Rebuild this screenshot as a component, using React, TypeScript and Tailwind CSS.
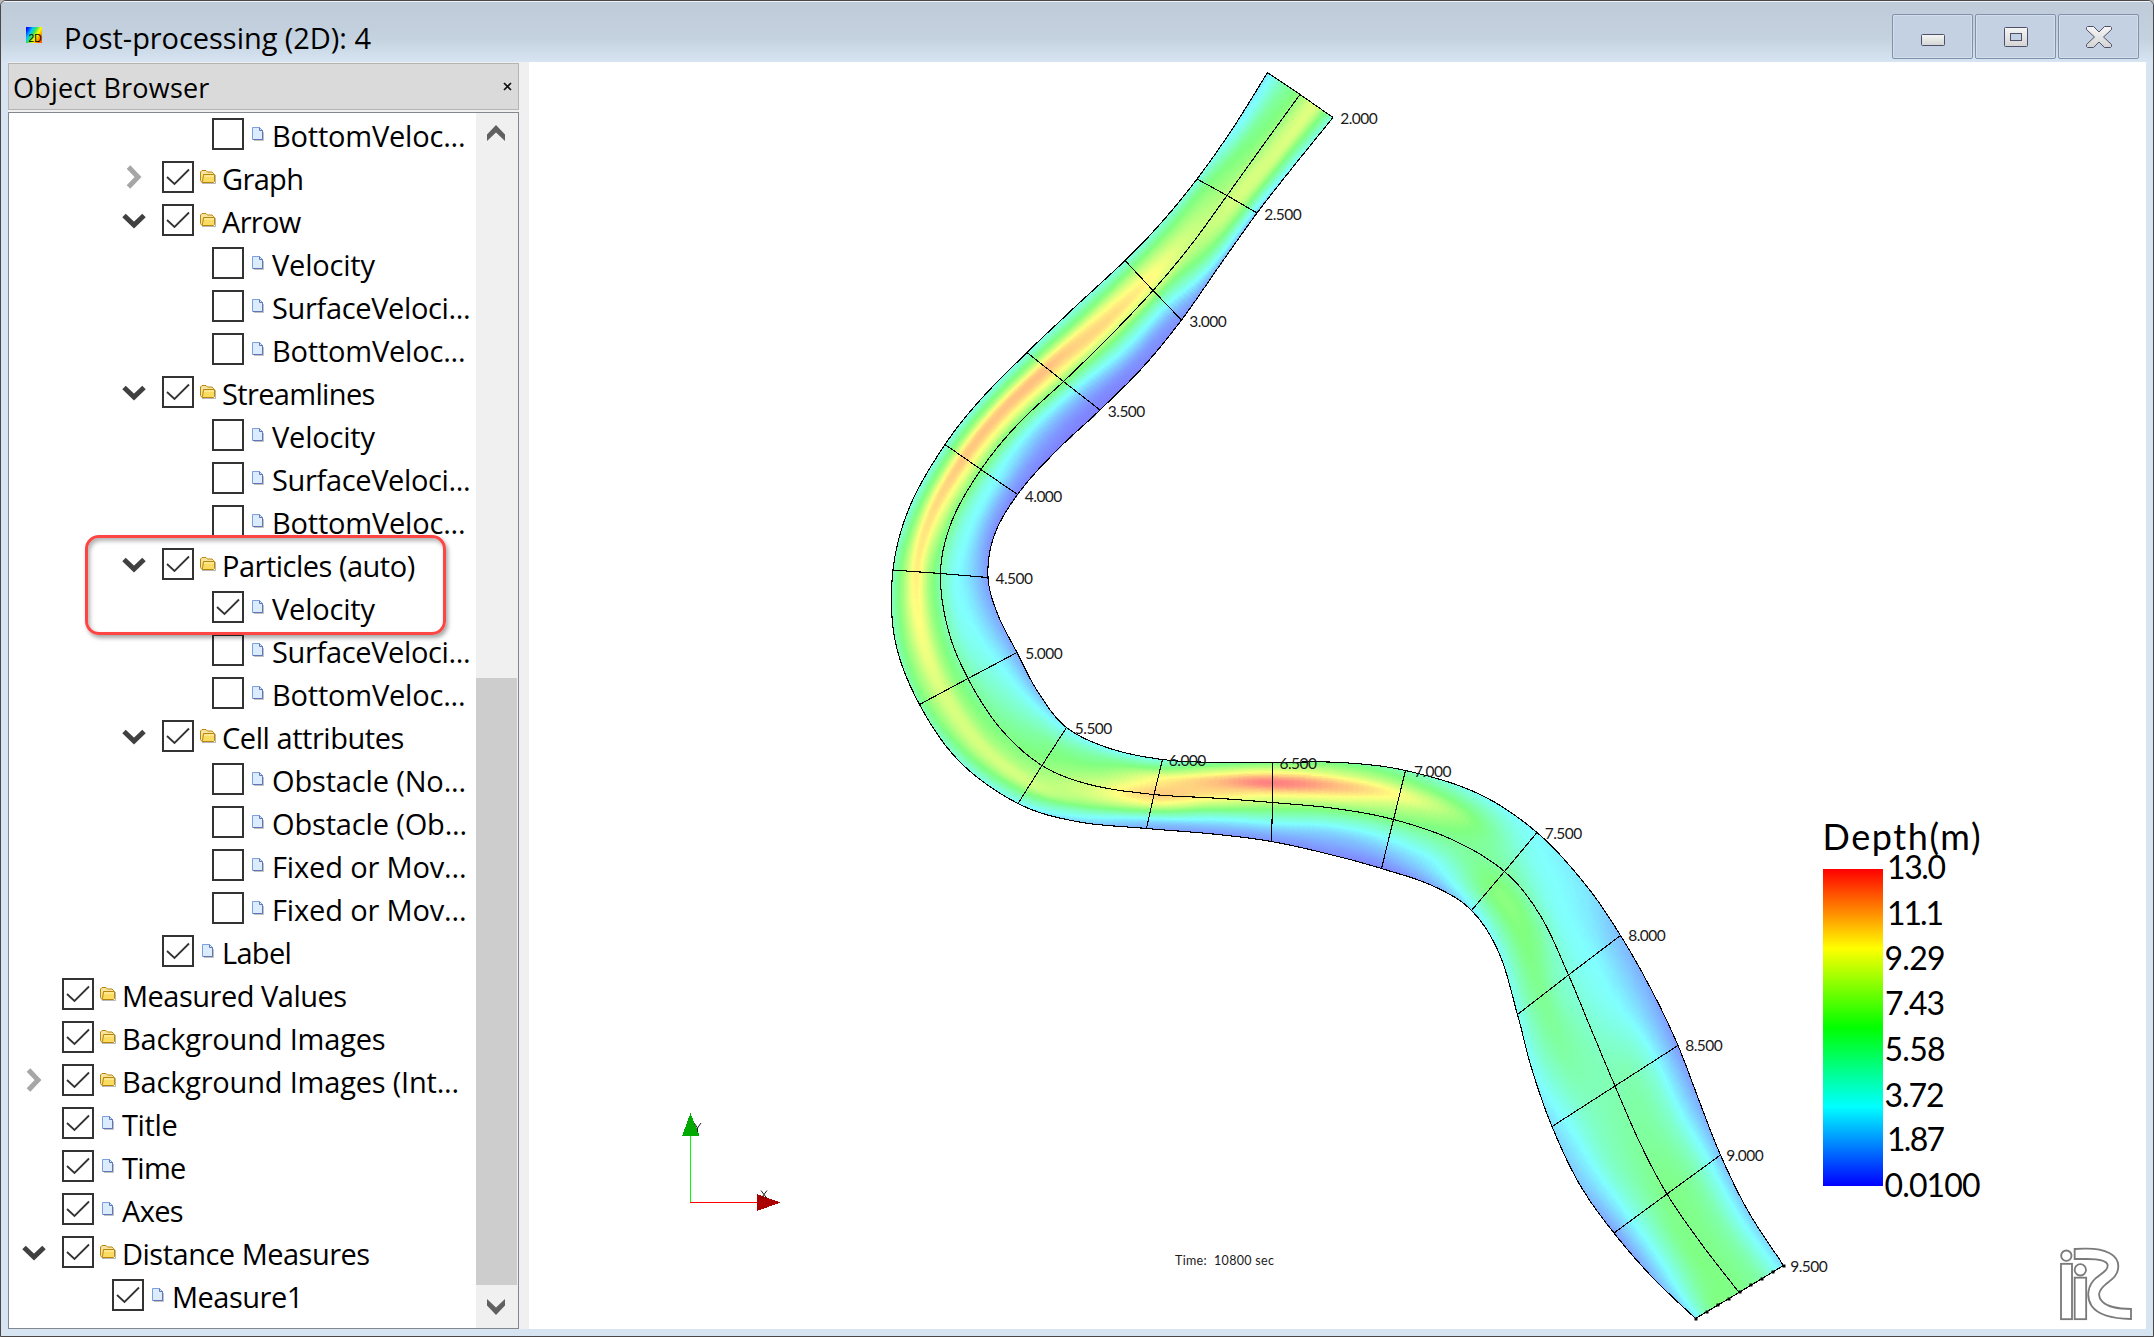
import React from "react";

type Pt = [number, number];

/* ---------- river geometry: banks and centre line at every half station ---------- */

const LEFT: Pt[] = [
  [1267.5, 72.5], [1233, 128], [1197, 179], [1161, 223], [1125, 260.5], [1076, 306], [1027, 352.5], [982, 398],
  [945, 444.5], [910, 506], [893, 570], [895, 640], [919.5, 704.5], [960, 762], [1018, 803.5], [1076.5, 821.5],
  [1146.5, 828.5], [1213, 834], [1271.5, 841.5], [1328, 854], [1381.5, 868.5], [1433, 886], [1471.5, 910.5], [1499, 953],
  [1517.5, 1014.5], [1531.5, 1068], [1552, 1126.5], [1580, 1185], [1614, 1233], [1653, 1278], [1695.5, 1318.5],
];
const MID: Pt[] = [
  [1300, 94.5], [1264, 144], [1227, 195.5], [1191, 245], [1153, 290.5], [1108, 338], [1063.5, 381.5], [1018, 424],
  [981, 469.5], [951.5, 522], [940.5, 573.5], [948, 629], [968, 678.5], [1000, 728], [1042, 765.5], [1091.5, 785],
  [1154, 794.5], [1213, 798], [1272.5, 802.5], [1335, 808.5], [1393.5, 819.5], [1453, 840], [1504.5, 871.5], [1540, 915],
  [1568.5, 975], [1591, 1029], [1615, 1086], [1640, 1143], [1667, 1194], [1701.5, 1244], [1739, 1292.5],
];
const RIGHT: Pt[] = [
  [1333, 117.5], [1293, 167], [1257, 213], [1220, 265], [1181.5, 320], [1143, 367], [1100, 410], [1055, 452],
  [1017.5, 494.5], [994, 536], [988, 577.5], [998, 615], [1017, 652.5], [1038, 692], [1066.5, 727.5], [1110, 748.5],
  [1162.5, 759.5], [1217, 762.5], [1272.5, 762.5], [1340, 762.5], [1405.5, 770.5], [1478, 793.5], [1537, 832.5], [1585, 884],
  [1620.5, 935.5], [1652, 991], [1678, 1045.5], [1700, 1103], [1720.5, 1155], [1748, 1211], [1783.5, 1265.5],
];

/* Relative depth (0..1) at nine points across the channel, left bank to right bank. */
const DEPTH: number[][] = [
  [0.19, 0.3, 0.4, 0.47, 0.54, 0.65, 0.68, 0.5, 0.3],
  [0.22, 0.32, 0.45, 0.5, 0.56, 0.65, 0.66, 0.45, 0.22],
  [0.28, 0.45, 0.53, 0.57, 0.62, 0.67, 0.6, 0.38, 0.13],
  [0.3, 0.48, 0.6, 0.66, 0.64, 0.58, 0.47, 0.3, 0.1],
  [0.28, 0.5, 0.68, 0.77, 0.66, 0.42, 0.24, 0.1, 0.03],
  [0.28, 0.5, 0.76, 0.82, 0.62, 0.38, 0.2, 0.06, 0.01],
  [0.27, 0.55, 0.86, 0.77, 0.52, 0.28, 0.12, 0.03, 0.0],
  [0.27, 0.55, 0.86, 0.75, 0.49, 0.28, 0.14, 0.05, 0.0],
  [0.27, 0.55, 0.85, 0.73, 0.51, 0.31, 0.21, 0.09, 0.01],
  [0.28, 0.55, 0.81, 0.68, 0.47, 0.31, 0.23, 0.12, 0.02],
  [0.35, 0.58, 0.78, 0.58, 0.41, 0.28, 0.22, 0.14, 0.05],
  [0.37, 0.58, 0.74, 0.56, 0.4, 0.28, 0.24, 0.16, 0.07],
  [0.4, 0.58, 0.68, 0.54, 0.43, 0.34, 0.28, 0.2, 0.08],
  [0.3, 0.53, 0.67, 0.56, 0.48, 0.42, 0.35, 0.26, 0.12],
  [0.23, 0.45, 0.65, 0.6, 0.54, 0.5, 0.46, 0.36, 0.22],
  [0.15, 0.33, 0.55, 0.66, 0.66, 0.59, 0.51, 0.42, 0.24],
  [0.08, 0.2, 0.47, 0.73, 0.84, 0.8, 0.72, 0.5, 0.28],
  [0.04, 0.15, 0.32, 0.56, 0.75, 0.84, 0.86, 0.66, 0.42],
  [0.03, 0.12, 0.26, 0.44, 0.62, 0.8, 1, 0.75, 0.47],
  [0.02, 0.09, 0.18, 0.34, 0.53, 0.74, 0.88, 0.66, 0.46],
  [0.01, 0.1, 0.2, 0.33, 0.49, 0.62, 0.74, 0.56, 0.38],
  [0.08, 0.2, 0.28, 0.38, 0.45, 0.51, 0.54, 0.42, 0.26],
  [0.2, 0.37, 0.49, 0.5, 0.43, 0.37, 0.31, 0.27, 0.24],
  [0.25, 0.4, 0.5, 0.48, 0.37, 0.28, 0.25, 0.23, 0.2],
  [0.26, 0.4, 0.46, 0.38, 0.32, 0.27, 0.24, 0.18, 0.12],
  [0.24, 0.36, 0.43, 0.4, 0.35, 0.3, 0.25, 0.17, 0.08],
  [0.18, 0.27, 0.36, 0.39, 0.4, 0.4, 0.33, 0.19, 0.05],
  [0.13, 0.23, 0.35, 0.41, 0.44, 0.43, 0.36, 0.22, 0.08],
  [0.06, 0.2, 0.33, 0.43, 0.48, 0.47, 0.41, 0.28, 0.12],
  [0.1, 0.24, 0.38, 0.48, 0.48, 0.46, 0.4, 0.28, 0.15],
  [0.2, 0.4, 0.5, 0.49, 0.48, 0.46, 0.41, 0.3, 0.18],
];

const catmull = (a: number, b: number, c: number, d: number, t: number) =>
  0.5 * (2 * b + (c - a) * t + (2 * a - 5 * b + 4 * c - d) * t * t + (3 * b - a - 3 * c + d) * t * t * t);

function sample(values: number[], u: number) {
  const n = values.length - 1;
  const i = Math.min(Math.floor(u), n - 1);
  const p0 = i > 0 ? values[i - 1] : 2 * values[0] - values[1];
  const p3 = i + 2 <= n ? values[i + 2] : 2 * values[n] - values[n - 1];
  return catmull(p0, values[i], values[i + 1], p3, u - i);
}

const xs = (c: Pt[]) => c.map((p) => p[0]);
const ys = (c: Pt[]) => c.map((p) => p[1]);
const curve = (c: Pt[]) => {
  const cx = xs(c);
  const cy = ys(c);
  return (u: number): Pt => [sample(cx, u), sample(cy, u)];
};
const leftAt = curve(LEFT);
const midAt = curve(MID);
const rightAt = curve(RIGHT);
const STATIONS = LEFT.length - 1;

function across(l: Pt, m: Pt, r: Pt, v: number): Pt {
  const a = (1 - v) * (1 - 2 * v);
  const b = 4 * v * (1 - v);
  const c = v * (2 * v - 1);
  return [a * l[0] + b * m[0] + c * r[0], a * l[1] + b * m[1] + c * r[1]];
}

const LEVELS = 200;
const STOPS = [
  [128, 128, 255],
  [128, 255, 255],
  [128, 255, 128],
  [255, 255, 128],
  [255, 128, 128],
];
function levelColor(level: number) {
  const s = (level / LEVELS) * 4;
  const i = Math.min(3, Math.floor(s));
  const f = s - i;
  return `rgb(${STOPS[i].map((c, k) => Math.round(c + (STOPS[i + 1][k] - c) * f)).join(",")})`;
}

const NU = STATIONS * 12;
const NV = 56;

function buildBands() {
  const bands: string[] = Array(LEVELS + 1).fill("");
  const nodes: Pt[][] = [];
  for (let i = 0; i <= NU; i++) {
    const u = (i / NU) * STATIONS;
    const l = leftAt(u);
    const m = midAt(u);
    const r = rightAt(u);
    const row: Pt[] = [];
    for (let j = 0; j <= NV; j++) row.push(across(l, m, r, j / NV));
    nodes.push(row);
  }
  const columns = DEPTH[0].map((_, k) => DEPTH.map((d) => d[k]));
  const f = (p: Pt) => `${p[0].toFixed(1)} ${p[1].toFixed(1)}`;
  for (let i = 0; i < NU; i++) {
    const u = ((i + 0.5) / NU) * STATIONS;
    const profile = columns.map((c) => sample(c, u));
    for (let j = 0; j < NV; j++) {
      const d = Math.max(0, Math.min(1, sample(profile, ((j + 0.5) / NV) * 8)));
      const level = Math.round(d * LEVELS);
      bands[level] += `M${f(nodes[i][j])}L${f(nodes[i + 1][j])}L${f(nodes[i + 1][j + 1])}L${f(nodes[i][j + 1])}Z`;
    }
  }
  return bands;
}

const BANDS = buildBands();

const trace = (at: (u: number) => Pt) => {
  let d = "";
  for (let i = 0; i <= NU; i++) {
    const p = at((i / NU) * STATIONS);
    d += `${i ? "L" : "M"}${p[0].toFixed(1)} ${p[1].toFixed(1)}`;
  }
  return d;
};
const LINES = [trace(leftAt), trace(midAt), trace(rightAt)];
const SECTIONS = LEFT.map((l, i) => (i % 2 ? "" : `M${l}L${MID[i]}L${RIGHT[i]}`)).join("");

const STATION_LABELS: [string, number, number][] = [
  ["2.000", 1340.2, 124], ["2.500", 1264.2, 220], ["3.000", 1189.2, 326.7], ["3.500", 1107.8, 416.7],
  ["4.000", 1024.8, 501.7], ["4.500", 995.5, 584], ["5.000", 1025.2, 658.7], ["5.500", 1074.8, 734],
  ["6.000", 1168.8, 765.7], ["6.500", 1279.5, 769], ["7.000", 1414, 777], ["7.500", 1544.7, 838.7],
  ["8.000", 1628.2, 940.7], ["8.500", 1685.2, 1050.7], ["9.000", 1726.2, 1161], ["9.500", 1790.2, 1271.7],
];

const LEGEND: [string, number, number, number][] = [
  ["13.0", 1887, 878.7, 59], ["11.1", 1887, 924.7, 57], ["9.29", 1884.5, 969.7, 61], ["7.43", 1885, 1015.3, 60],
  ["5.58", 1884.5, 1060.7, 61], ["3.72", 1884.5, 1106.7, 60], ["1.87", 1887, 1151.3, 58], ["0.0100", 1884.5, 1196.7, 96],
];

function Viewport() {
  return (
    <svg className="block h-[1267px] w-[1617px] bg-white" viewBox="529 62 1617 1267">
      <defs>
        <linearGradient id="depth" x1="0" y1="0" x2="0" y2="1">
          <stop offset="0" stopColor="#ff0000" />
          <stop offset="0.25" stopColor="#ffff00" />
          <stop offset="0.5" stopColor="#00ff00" />
          <stop offset="0.75" stopColor="#00ffff" />
          <stop offset="1" stopColor="#0000ff" />
        </linearGradient>
      </defs>
      <g shapeRendering="crispEdges">
        {BANDS.map((d, i) => (d ? <path key={i} d={d} fill={levelColor(i)} stroke={levelColor(i)} strokeWidth="0.6" /> : null))}
      </g>
      <g shapeRendering="crispEdges" fill="none" stroke="#000" strokeWidth="1.1">
        {LINES.map((d, i) => (
          <path key={i} d={d} />
        ))}
        <path d={SECTIONS} />
      </g>
      {Array.from({ length: 9 }, (_, i) => (
        <rect
          key={i}
          x={Math.round(1695.5 + (88 * i) / 8) - 1.5}
          y={Math.round(1318.5 - (53 * i) / 8) - 1.5}
          width="3"
          height="3"
        />
      ))}
      <g className="font-['Lato']" fontWeight="400" fill="#1a1a1a">
        {STATION_LABELS.map(([t, x, y]) => (
          <text key={t} x={x} y={y} fontSize="15.5" textLength="37.5" lengthAdjust="spacing">
            {t}
          </text>
        ))}
        <text x="1175" y="1264.5" fontSize="12.5" textLength="99" xmlSpace="preserve">
          Time:{"\u00a0"} 10800 sec
        </text>
      </g>
      <g className="font-['Lato']" fill="#000">
        <text x="1822.5" y="850" fontSize="36" textLength="158">
          Depth(m)
        </text>
        {LEGEND.map(([t, x, y, w]) => (
          <text key={t} x={x} y={y} fontSize="32" textLength={w}>
            {t}
          </text>
        ))}
      </g>
      <rect x="1823" y="869" width="60" height="317" fill="url(#depth)" />

      <g shapeRendering="crispEdges">
        <path d="M690.5 1203V1130" stroke="#00ff00" />
        <path d="M690 1202.5H760" stroke="#ff0000" />
        <path d="M690.5 1113L699.5 1136H682Z" fill="#00aa00" />
        <path d="M780.5 1202.5L757 1194V1211Z" fill="#aa0000" />
      </g>
      <path d="M694.5 1123.5L697.5 1128L701 1123M697.5 1128V1132" stroke="#222" fill="none" />
      <path d="M761 1190.5L767 1198.5M767 1190.5L761 1198.5" stroke="#222" fill="none" />

      <g transform="translate(2034 1230) scale(0.33333)" fill="none" stroke="#7a7a7a" strokeWidth="5.5">
        <circle cx="97" cy="77" r="15.5" />
        <rect x="81" y="101.5" width="33" height="166" />
        <circle cx="139" cy="119.5" r="17" />
        <rect x="122" y="143" width="34.5" height="124.5" />
        <path d="M122 57L150 56C215 54 253 75 253 108C253 136 234 148 215 163C192 182 190 200 205 215C222 232 250 236 291 237V267C230 266 190 252 173 228C156 202 160 166 187 143C207 127 222 120 221 105C218 91 190 87 160 87H122Z" />
      </g>
    </svg>
  );
}

/* ---------- object browser ---------- */

type Row = {
  label: string;
  level: number;
  kind: "folder" | "file";
  tracking: string;
  checked?: boolean;
  arrow?: "open" | "closed";
};

const T15 = "tracking-[-0.2px]";
const T20 = "tracking-[-0.15px]";
const T30 = "tracking-[-0.35px]";
const T45 = "tracking-[-0.45px]";
const T50 = "tracking-[-0.5px]";
const T60 = "tracking-[-0.65px]";
const T70 = "tracking-[-0.7px]";

const ROWS: Row[] = [
  { label: "BottomVeloc...", level: 3, kind: "file", tracking: T15 },
  { label: "Graph", level: 2, kind: "folder", tracking: T60, checked: true, arrow: "closed" },
  { label: "Arrow", level: 2, kind: "folder", tracking: T70, checked: true, arrow: "open" },
  { label: "Velocity", level: 3, kind: "file", tracking: T15 },
  { label: "SurfaceVeloci...", level: 3, kind: "file", tracking: T30 },
  { label: "BottomVeloc...", level: 3, kind: "file", tracking: T15 },
  { label: "Streamlines", level: 2, kind: "folder", tracking: T60, checked: true, arrow: "open" },
  { label: "Velocity", level: 3, kind: "file", tracking: T15 },
  { label: "SurfaceVeloci...", level: 3, kind: "file", tracking: T30 },
  { label: "BottomVeloc...", level: 3, kind: "file", tracking: T15 },
  { label: "Particles (auto)", level: 2, kind: "folder", tracking: T50, checked: true, arrow: "open" },
  { label: "Velocity", level: 3, kind: "file", tracking: T15, checked: true },
  { label: "SurfaceVeloci...", level: 3, kind: "file", tracking: T30 },
  { label: "BottomVeloc...", level: 3, kind: "file", tracking: T15 },
  { label: "Cell attributes", level: 2, kind: "folder", tracking: T45, checked: true, arrow: "open" },
  { label: "Obstacle (No...", level: 3, kind: "file", tracking: T20 },
  { label: "Obstacle (Ob...", level: 3, kind: "file", tracking: T20 },
  { label: "Fixed or Mov...", level: 3, kind: "file", tracking: T20 },
  { label: "Fixed or Mov...", level: 3, kind: "file", tracking: T20 },
  { label: "Label", level: 2, kind: "file", tracking: T70, checked: true },
  { label: "Measured Values", level: 0, kind: "folder", tracking: T50, checked: true },
  { label: "Background Images", level: 0, kind: "folder", tracking: T15, checked: true },
  { label: "Background Images (Int...", level: 0, kind: "folder", tracking: T15, checked: true, arrow: "closed" },
  { label: "Title", level: 0, kind: "file", tracking: T30, checked: true },
  { label: "Time", level: 0, kind: "file", tracking: T70, checked: true },
  { label: "Axes", level: 0, kind: "file", tracking: T60, checked: true },
  { label: "Distance Measures", level: 0, kind: "folder", tracking: T50, checked: true, arrow: "open" },
  { label: "Measure1", level: 1, kind: "file", tracking: T50, checked: true },
];

const INDENT = ["pl-0", "pl-[50px]", "pl-[100px]", "pl-[150px]"];

function FolderIcon() {
  return (
    <svg width="16" height="14" viewBox="0 0 16 14" className="mt-[14px] ml-[6px] shrink-0">
      <path d="M2 13.5H15.5V5" fill="none" stroke="#8a8a8a" strokeOpacity=".6" />
      <path d="M.5 10.5V2L2 .5H6L7.5 2H12L13.5 3.5V6H3.5V12.5H2Z" fill="#f7e3a0" stroke="#b8860b" />
      <path d="M3.5 4.5H14.5V11.5L13.5 12.5H3L2.5 11.5Z" fill="#fbdc62" stroke="#b8860b" />
      <path d="M4 6H14" stroke="#fff3b8" />
    </svg>
  );
}

function FileIcon() {
  return (
    <svg width="12" height="14" viewBox="0 0 12 14" className="mt-[14px] mr-[2px] ml-[8px] shrink-0">
      <path d="M2 13.5H11.5V5" fill="none" stroke="#999" strokeOpacity=".6" />
      <path d="M.5.5H7.5L10.5 3.5V12.5H.5Z" fill="#dcecff" stroke="#7c9fe0" />
      <path d="M7.5.5V3.5H10.5V12.5H1" fill="none" stroke="#5f76b8" />
    </svg>
  );
}

function TreeRow({ row }: { row: Row }) {
  return (
    <div className={`flex h-[43px] items-start ${INDENT[row.level]}`}>
      <div className="flex h-full w-[53px] shrink-0 justify-center">
        {row.arrow === "open" && (
          <svg width="24" height="16" viewBox="0 0 24 16" className="mt-[14px] mr-[3px]">
            <path d="M2 2.5L12 12L22 2.5" fill="none" stroke="#404040" strokeWidth="5" />
          </svg>
        )}
        {row.arrow === "closed" && (
          <svg width="16" height="24" viewBox="0 0 16 24" className="mt-[9px] mr-[3px]">
            <path d="M2.5 2L12 12L2.5 22" fill="none" stroke="#a6a6a6" strokeWidth="5" />
          </svg>
        )}
      </div>
      <div className="mt-[5px] flex h-8 w-8 shrink-0 items-center justify-center border-2 border-[#333] bg-white">
        {row.checked && (
          <svg width="24" height="18" viewBox="0 0 24 18" className="-mt-[1px] shrink-0">
            <path d="M1 9L8.5 16L23 1.5" fill="none" stroke="#333" strokeWidth="1.8" />
          </svg>
        )}
      </div>
      {row.kind === "folder" ? <FolderIcon /> : <FileIcon />}
      <span className={`mt-[2px] ml-[6px] text-[29px] leading-[42px] whitespace-nowrap text-black ${row.tracking}`}>
        {row.label}
      </span>
    </div>
  );
}

function ObjectBrowser() {
  return (
    <div className="flex h-full w-[521px] shrink-0 flex-col bg-[#f0f0f0] pt-px">
      <div className="flex h-[47px] w-[511px] items-center justify-between border border-[#b4b4b4] bg-[#dadada] pr-[6px] pl-[4px]">
        <span className="pt-[2px] text-[27px] leading-none tracking-[0.2px] text-black">Object Browser</span>
        <svg width="9" height="9" viewBox="0 0 9 9">
          <path d="M1 1L8 8M8 1L1 8" stroke="#111" strokeWidth="1.7" />
        </svg>
      </div>
      <div className="relative mt-[2px] flex h-[1217px] w-[511px] border border-[#828790] bg-white">
        <div className="w-[467px] shrink-0">
          {ROWS.map((row, i) => (
            <TreeRow key={i} row={row} />
          ))}
        </div>
        <div className="flex w-[42px] flex-col bg-[#f0f0f0]">
          <div className="flex h-[42px] w-10 justify-center pt-[12px]">
            <svg width="18" height="17" viewBox="0 0 18 17">
              <path d="M9 0L18 9.5V16L9 7.5L0 16V9.5Z" fill="#606060" />
            </svg>
          </div>
          <div className="h-[523px]" />
          <div className="h-[607px] w-[41px] bg-[#cdcdcd]" />
          <div className="flex w-10 justify-center pt-[14px]">
            <svg width="18" height="17" viewBox="0 0 18 17">
              <path d="M9 16L18 6.5V0L9 8.5L0 0V6.5Z" fill="#606060" />
            </svg>
          </div>
        </div>
        <div className="absolute top-[422px] left-[76px] h-[100px] w-[361px] rounded-[14px] border-[3px] border-[#fd4543] shadow-[2px_3px_4px_rgba(0,0,0,0.35),inset_2px_3px_4px_rgba(0,0,0,0.3)]" />
      </div>
    </div>
  );
}

function CaptionButton({ children }: { children: React.ReactNode }) {
  return (
    <div className="flex h-[45px] w-[81px] items-center justify-center rounded-[2px] border border-[#8091b0] bg-[#c4d1e2] shadow-[inset_0_0_0_1px_#d3deea]">
      {children}
    </div>
  );
}

export default function App() {
  return (
    <div className="h-[1337px] w-[2154px] overflow-hidden bg-[#b9b9b9] font-['Open_Sans','Noto_Sans',sans-serif]">
      <div className="flex h-full w-full flex-col overflow-hidden rounded-t-[6px] border border-[#4b4648] bg-[#d7e4f1]">
        <div className="flex h-[61px] shrink-0 items-start justify-between border-t border-[#eef3f8] bg-linear-to-b from-[#bfcbd9] from-0% via-[#c4d1de] via-60% to-[#d7e4f2] to-100% pr-[14px]">
          <div className="flex items-start pl-[25px]">
            <svg width="16" height="16" viewBox="0 0 16 16" className="mt-[25px]">
              <defs>
                <linearGradient id="app" x1="0" y1="0" x2="1" y2="0.6">
                  <stop offset="0.1" stopColor="#0010ff" />
                  <stop offset="0.35" stopColor="#00c8ff" />
                  <stop offset="0.5" stopColor="#30e060" />
                  <stop offset="0.72" stopColor="#ffff00" />
                  <stop offset="1" stopColor="#ff6000" />
                </linearGradient>
              </defs>
              <rect width="16" height="16" fill="url(#app)" />
              <text x="2.5" y="14.5" fontSize="10.5" className="font-['Liberation_Sans']" textLength="13" lengthAdjust="spacingAndGlyphs">
                2D
              </text>
            </svg>
            <span className="mt-[15px] ml-[22px] text-[29px] leading-[42px] tracking-[-0.05px] whitespace-nowrap text-black">
              Post-processing (2D): 4
            </span>
          </div>
          <div className="mt-[12px] flex gap-[2px]">
            <CaptionButton>
              <svg width="24" height="12" viewBox="0 0 24 12" className="mt-[7px]">
                <defs>
                  <linearGradient id="glyph" x1="0" y1="0" x2="0" y2="1">
                    <stop offset="0" stopColor="#f6f6f6" />
                    <stop offset="1" stopColor="#d4d4d4" />
                  </linearGradient>
                </defs>
                <rect x=".5" y=".5" width="23" height="11" rx="1" fill="url(#glyph)" stroke="#4d5068" />
              </svg>
            </CaptionButton>
            <CaptionButton>
              <svg width="24" height="20" viewBox="0 0 24 20">
                <rect x=".5" y=".5" width="23" height="19" rx="1" fill="url(#glyph)" stroke="#4d5068" />
                <rect x="6.5" y="6.5" width="11" height="7" fill="#c4d1e2" stroke="#4d5068" />
              </svg>
            </CaptionButton>
            <CaptionButton>
              <svg width="26" height="22" viewBox="0 0 26 22">
                <path
                  d="M1.5.5H7.5L13 6L18.5.5H24.5L25.5 1.5V3.5L17.5 11L25.5 18.5V20.5L24.5 21.5H18.5L13 16L7.5 21.5H1.5L.5 20.5V18.5L8.5 11L.5 3.5V1.5Z"
                  fill="url(#glyph)"
                  stroke="#4d5068"
                />
              </svg>
            </CaptionButton>
          </div>
        </div>
        <div className="flex h-[1267px] pl-[7px]">
          <ObjectBrowser />
          <div className="shrink-0">
            <Viewport />
          </div>
        </div>
      </div>
    </div>
  );
}
